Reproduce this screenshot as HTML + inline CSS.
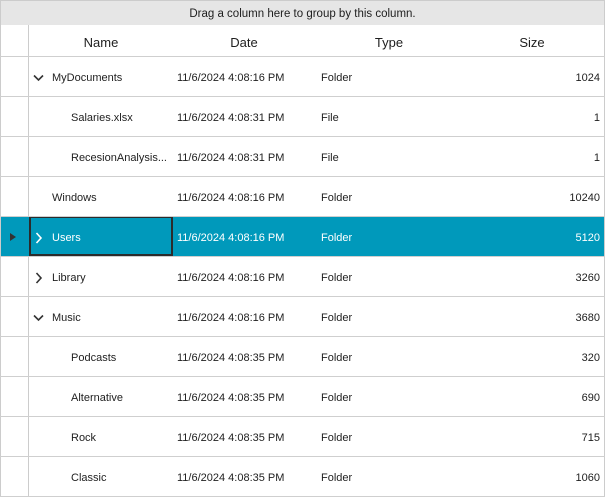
<!DOCTYPE html>
<html><head><style>
*{margin:0;padding:0;box-sizing:border-box}
body{width:605px;height:498px;background:#fff;font-family:"Segoe UI","Liberation Sans",sans-serif;font-size:12px;color:#1e1e1e;position:relative;overflow:hidden}
.a{position:absolute}
.gp{left:0;top:0;width:605px;height:25px;background:#e6e6e6;border:1px solid #ccc;border-bottom:none;text-align:center;line-height:26px;font-size:11.5px}
.hl{height:1px;background:#cfcfcf;left:0;width:605px}
.row{left:0;width:605px;height:40px}
.t{position:absolute;top:2px;line-height:40px;white-space:nowrap;font-size:11px}
.h{position:absolute;top:26px;line-height:33px;font-size:13px;text-align:center;width:144px}
</style></head><body>
<div class="a gp">Drag a column here to group by this column.</div>
<div class="a" style="left:0;top:25px;width:1px;height:472px;background:#ccc"></div>
<div class="a" style="left:604px;top:25px;width:1px;height:472px;background:#ccc"></div>
<div class="a" style="left:28px;top:25px;width:1px;height:472px;background:#ccc"></div>
<div class="h" style="left:29px">Name</div>
<div class="h" style="left:172px">Date</div>
<div class="h" style="left:317px">Type</div>
<div class="h" style="left:460px">Size</div>
<div class="a hl" style="top:56px"></div>

<div class="a row" style="top:217px;left:1px;width:603px;height:39px;background:#0099bb"></div>
<div class="a" style="left:29px;top:216px;width:144px;height:40px;border:2px solid #2b2b2b"></div>
<svg class="a" style="left:9px;top:232px" width="8" height="10"><path d="M1 1 L7 5 L1 9Z" fill="#333"/></svg>

<div id="rows"></div>
<script>
var d=[["MyDocuments",0,"11/6/2024 4:08:16 PM","Folder","1024","d"],
["Salaries.xlsx",1,"11/6/2024 4:08:31 PM","File","1",""],
["RecesionAnalysis...",1,"11/6/2024 4:08:31 PM","File","1",""],
["Windows",0,"11/6/2024 4:08:16 PM","Folder","10240",""],
["Users",0,"11/6/2024 4:08:16 PM","Folder","5120","r"],
["Library",0,"11/6/2024 4:08:16 PM","Folder","3260","r"],
["Music",0,"11/6/2024 4:08:16 PM","Folder","3680","d"],
["Podcasts",1,"11/6/2024 4:08:35 PM","Folder","320",""],
["Alternative",1,"11/6/2024 4:08:35 PM","Folder","690",""],
["Rock",1,"11/6/2024 4:08:35 PM","Folder","715",""],
["Classic",1,"11/6/2024 4:08:35 PM","Folder","1060",""]];
var h="";
d.forEach(function(r,i){var y=57+i*40;var sel=i==4;var c=sel?"#fff":"#1e1e1e";
h+='<div class="a row" style="top:'+(y-1)+'px;color:'+c+'">';
h+='<span class="t" style="left:'+(r[1]?71:52)+'px">'+r[0]+'</span>';
h+='<span class="t" style="left:177px">'+r[2]+'</span>';
h+='<span class="t" style="left:321px">'+r[3]+'</span>';
h+='<span class="t" style="right:5px">'+r[4]+'</span>';
var sc=sel?"#fff":"#333";
if(r[5]=="d")h+='<svg class="a" style="left:33px;top:18px" width="11" height="8"><path d="M1 1.5 L5.5 6 L10 1.5" stroke="'+sc+'" stroke-width="1.6" fill="none"/></svg>';
if(r[5]=="r")h+='<svg class="a" style="left:35px;top:16px" width="8" height="12"><path d="M1.5 1 L6 6 L1.5 11" stroke="'+sc+'" stroke-width="1.6" fill="none"/></svg>';
h+='</div><div class="a hl" style="top:'+(y+39)+'px"></div>';});
document.getElementById("rows").innerHTML=h;
</script>
</body></html>
